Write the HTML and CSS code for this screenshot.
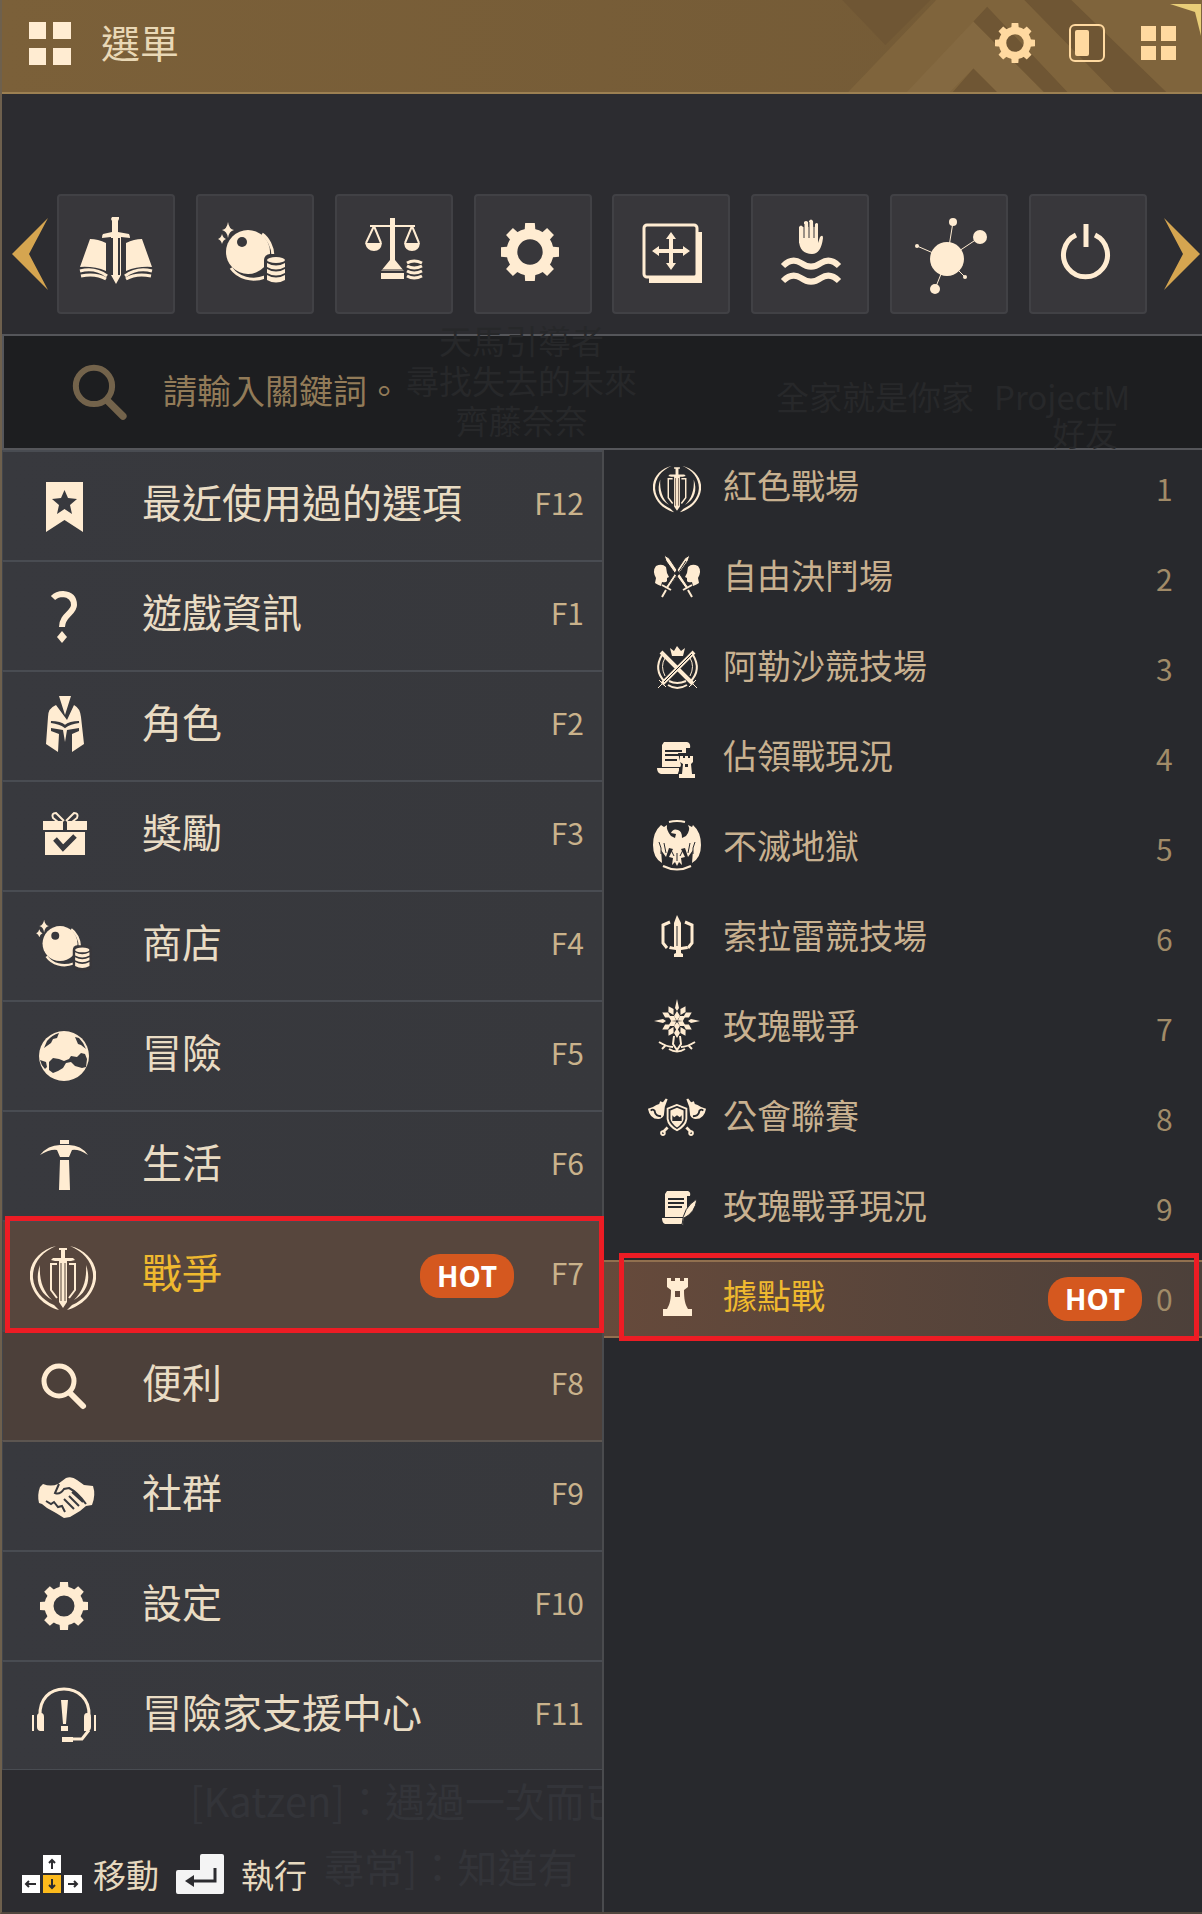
FILE: index.html
```html
<!DOCTYPE html>
<html lang="zh-Hant">
<head>
    <meta charset="UTF-8">
    <meta name="viewport" content="width=device-width, initial-scale=1.0">
    <title>選單</title>
    <link rel="stylesheet" href="styles.css">
</head>
<body>
    <!-- Shared icons -->
    <svg class="sprite" aria-hidden="true">
        <symbol id="gear" viewBox="0 0 48 48">
            <circle cx="24" cy="24" r="15" fill="none" stroke="currentColor" stroke-width="9"/>
            <g fill="currentColor">
                <path id="tooth" d="M19.500 7L20 0h8l.5 7z"/>
                <use href="#tooth" transform="rotate(45 24 24)"/>
                <use href="#tooth" transform="rotate(90 24 24)"/>
                <use href="#tooth" transform="rotate(135 24 24)"/>
                <use href="#tooth" transform="rotate(180 24 24)"/>
                <use href="#tooth" transform="rotate(225 24 24)"/>
                <use href="#tooth" transform="rotate(270 24 24)"/>
                <use href="#tooth" transform="rotate(315 24 24)"/>
            </g>
        </symbol>
        <symbol id="orb" viewBox="0 0 80 80">
            <circle cx="33" cy="38" r="22" fill="currentColor"/>
            <path d="M47 20c6 4 11 13 11 22M16 54c7 10 21 14 34 9" fill="none" stroke="currentColor" stroke-width="3"/>
            <circle cx="27" cy="28" r="5" fill="#38373b"/>
            <rect x="49" y="40" width="24" height="32" rx="6" fill="#38373b"/>
            <g fill="currentColor">
                <ellipse cx="61" cy="46" rx="9" ry="3"/>
                <path d="M52 49q9 5 18 0v4q-9 5-18 0zM52 55q9 5 18 0v4q-9 5-18 0zM52 61q9 5 18 0v5q-9 5-18 0z"/>
                <path d="M13 8q1 7 6 8-5 1-6 8-1-7-6-8 5-1 6-8zM7 20q1 4 4 5-3 1-4 5-1-4-4-5 3-1 4-5z"/>
            </g>
        </symbol>
        <symbol id="emblem" viewBox="0 0 66 66">
            <g fill="currentColor">
                <path d="M26 1C9 5-2 19 0 34c2 15 14 27 29 31l-5-5C12 55 4 45 3 33 2 20 11 7 26 1z"/>
                <path d="M40 1c17 4 28 18 26 33-2 15-14 27-29 31l5-5c12-5 20-15 21-27C64 20 55 7 40 1z"/>
                <path d="M10 20c-5 14-2 27 12 35-9-9-13-20-12-35zM56 20c5 14 2 27-12 35 9-9 13-20 12-35z"/>
                <path d="M29 3h8v2h-2v8h8l2 2-4 1h-4v41l-4 6-4-6V16h-4l-4-1 2-2h8V5h-2z"/>
            </g>
            <path d="M27 19h-6v26l6 8M39 19h6v26l-6 8" fill="none" stroke="currentColor" stroke-width="2"/>
            <path d="M31 18v38M35 18v38" stroke="#57463d"/>
        </symbol>
        <symbol id="lens" viewBox="0 0 60 60">
            <circle cx="25" cy="25" r="15" fill="none" stroke="currentColor" stroke-width="5"/>
            <path d="M36 37l13 13" stroke="currentColor" stroke-width="6" stroke-linecap="round"/>
        </symbol>
        <symbol id="tower" viewBox="0 0 60 60">
            <path fill="currentColor" fill-rule="evenodd" d="M20 9h4v3h4V9h5v3h4V9h4v9l-4 3c0 9 1 14 4 19h4v7H16v-7h4c3-5 4-10 4-19l-4-3zM28 22v6h5v-6z"/>
        </symbol>
    </svg>

    <div class="menu-window">
        <header class="title-bar">
            <svg class="title-pattern" viewBox="0 0 402 94" aria-hidden="true">
                <path d="M40 94l90-94h272v94z" fill="#7f643c"/>
                <path d="M34 0h90L78 46z" fill="#6f5634"/>
                <path d="M100 94l68-72 72 72h-48l-24-24-24 24z" fill="#846941"/>
                <path d="M147 94l21-24 24 24zM168 22l14-15 82 87h-24zM220 0h48l97 94h-53z" fill="#6f5634"/>
            </svg>
            <svg class="title-icon" viewBox="0 0 42 44" aria-hidden="true">
                <path d="M0 1h17v17H0zM24 1h18v17H24zM0 27h17v17H0zM24 27h18v17H24z" fill="#ffecd2"/>
            </svg>
            <h1>選單</h1>
            <div class="window-tools">
                <button type="button" aria-label="設定"><svg viewBox="0 0 48 48"><use href="#gear"/></svg></button>
                <button type="button" aria-label="側邊欄"><svg viewBox="0 0 40 40"><rect x="3" y="2" width="34" height="36" rx="5" fill="none" stroke="currentColor" stroke-width="2"/><rect x="8" y="7" width="14" height="26" rx="2" fill="currentColor"/></svg></button>
                <button type="button" aria-label="全部選單"><svg viewBox="0 0 40 40"><path d="M2 3h15v15H2zM22 3h15v15H22zM2 23h15v14H2zM22 23h15v14H22z" fill="currentColor"/></svg></button>
            </div>
            <svg class="title-corner" viewBox="0 0 32 32" aria-hidden="true"><path d="M0 0h31v32l-6-24z" fill="#e8cd78"/></svg>
        </header>

        <nav class="shortcuts" aria-label="快捷選單">
            <button type="button" class="arrow" aria-label="上一頁">
                <svg viewBox="0 0 36 72"><path d="M36 0L0 36l36 36-19-36z" fill="#d5a550"/></svg>
            </button>
            <div class="tiles">
                <button type="button" class="tile" aria-label="黑暗知識">
                    <svg viewBox="0 0 80 80">
                        <path d="M14 25q8 0 16 4v28q-12-5-26-4zM66 25q-8 0-16 4v28q12-5 26-4z" fill="currentColor"/>
                        <path d="M4 57q15-4 27 5M5 62q15-3 25 3M76 57q-15-4-27 5M75 62q-15-3-25 3" fill="none" stroke="currentColor" stroke-width="3"/>
                        <path d="M36 3h7v2l-1 2v11l11 2q1 2 1 4l-9-1v38l-5 9-5-9V23l-9 1q0-3 1-4l9-2V7l-1-2z" fill="currentColor"/>
                        <path d="M36 24v37M43 24v37" stroke="#38373b" stroke-width="2"/>
                    </svg>
                </button>
                <button type="button" class="tile" aria-label="商店"><svg viewBox="0 0 80 80"><use href="#orb"/></svg></button>
                <button type="button" class="tile" aria-label="交易所">
                    <svg viewBox="0 0 80 80">
                        <path d="M36 4h5v42l9 11H27l9-11zM27 59h23v6H27z" fill="currentColor"/>
                        <path d="M16 12h45M20 12l-8 17M20 12l7 17M58 12l-7 17M58 12l7 17" fill="none" stroke="currentColor" stroke-width="2"/>
                        <path d="M11 29h17q-1 8-8 8t-9-8zM50 29h16q-1 8-8 8t-8-8z" fill="currentColor"/>
                        <path d="M53 49q7-4 15 0M53 52q7 4 15 0M53 57q7 4 15 0M53 62q7 4 15 0" fill="none" stroke="currentColor" stroke-width="3"/>
                        <path d="M27 56h23" stroke="#38373b"/>
                    </svg>
                </button>
                <button type="button" class="tile" aria-label="設定"><svg viewBox="-8 -9 80 80"><use href="#gear" width="58" height="58"/></svg></button>
                <button type="button" class="tile" aria-label="編輯介面">
                    <svg viewBox="0 0 80 80">
                        <path d="M18 64v5h53V18h-5v45z" fill="currentColor"/>
                        <rect x="13" y="11" width="53" height="52" rx="3" fill="#38373b" stroke="currentColor" stroke-width="3"/>
                        <path d="M40 22v30M25 37h30" stroke="currentColor" stroke-width="4"/>
                        <path d="M40 18l5 7H35zM40 56l5-7H35zM21 37l7-5v10zM59 37l-7-5v10z" fill="currentColor"/>
                    </svg>
                </button>
                <button type="button" class="tile" aria-label="脫困">
                    <svg viewBox="0 0 80 80">
                        <path d="M29 13q2-3 4 0l1 10V8q2-2 4 0v14l1-15q2-3 4 0l1 15 1-12q2-2 3 0v19l2-6q3-3 3 1-2 16-11 16c-8 0-13-5-13-14z" fill="currentColor"/>
                        <path d="M29 13h19v16H29z" fill="currentColor"/>
                        <path d="M34 10v14M39 8v16M44 9v15" stroke="#38373b"/>
                        <path d="M13 52q9-9 18-3c7 5 13 5 20 0q9-6 18 3M13 67q9-9 18-3c7 5 13 5 20 0q9-6 18 3" fill="none" stroke="currentColor" stroke-width="6"/>
                    </svg>
                </button>
                <button type="button" class="tile" aria-label="伺服器">
                    <svg viewBox="0 0 80 80">
                        <path d="M44 8l-6 37L71 23M8 32l30 13 18 18M38 45L26 75" fill="none" stroke="currentColor"/>
                        <g fill="currentColor"><circle cx="38" cy="45" r="17"/><circle cx="71" cy="23" r="7"/><circle cx="44" cy="8" r="4"/><circle cx="8" cy="32" r="2"/><circle cx="56" cy="63" r="2"/><circle cx="26" cy="75" r="5"/></g>
                    </svg>
                </button>
                <button type="button" class="tile" aria-label="結束遊戲">
                    <svg viewBox="0 0 80 80">
                        <path d="M28 21a22 22 0 1 0 19 0" fill="none" stroke="currentColor" stroke-width="5"/>
                        <path d="M38 10v23" stroke="currentColor" stroke-width="5"/>
                    </svg>
                </button>
            </div>
            <button type="button" class="arrow" aria-label="下一頁">
                <svg viewBox="0 0 36 72"><path d="M0 0l36 36L0 72l19-36z" fill="#d5a550"/></svg>
            </button>
        </nav>

        <div class="search">
            <!-- World text that shows through the panel -->
            <div class="ghost ghost-search" aria-hidden="true">
                <span>天馬引導者</span>
                <span>尋找失去的未來</span>
                <span>齊藤奈奈</span>
            </div>
            <div class="ghost ghost-guild" aria-hidden="true">
                <span>全家就是你家</span>
                <span>ProjectM</span>
            </div>
            <div class="ghost ghost-friend" aria-hidden="true">
                <span>好友</span>
            </div>
            <label for="keyword" aria-label="搜尋"><svg viewBox="6 6 48 48"><use href="#lens" width="60" height="60"/></svg></label>
            <input type="text" id="keyword" placeholder="請輸入關鍵詞。">
        </div>

        <main class="columns">
            <div class="left-column">
                <nav class="main-menu" aria-label="主選單">
                    <button type="button">
                        <svg viewBox="-5 -5 70 70"><path fill="currentColor" fill-rule="evenodd" d="M12 6h37v50L30.500 44 12 56zM30.500 14l-3.500 8-9 1 7 6-2 9 7.500-5 7.500 5-2-9 7-6-9-1z"/></svg>
                        <span class="label">最近使用過的選項</span><kbd>F12</kbd>
                    </button>
                    <button type="button">
                        <svg viewBox="-5 -5 70 70"><path d="M19 12q4-4 10-4 11 1 11 11c0 8-12 10-12 22" fill="none" stroke="currentColor" stroke-width="6"/><path d="M28 45l5 6-5 6-5-6z" fill="currentColor"/></svg>
                        <span class="label">遊戲資訊</span><kbd>F1</kbd>
                    </button>
                    <button type="button">
                        <svg viewBox="-5 -5 70 70"><path d="M25 0h12l-6 19zM22 9q-8 3-8 12L12 48l12 8 1-18-8-3v-3l12 2 2 12 2-12 12-2v3l-7 3v18l12-8-3-27q-1-9-7-12l-7 15z" fill="currentColor"/><path d="M17 26q9 0 14 4 5-4 14-4-9 1-14 5-5-4-14-5z" fill="#38393e" stroke="#38393e" stroke-width="2"/></svg>
                        <span class="label">角色</span><kbd>F2</kbd>
                    </button>
                    <button type="button">
                        <svg viewBox="-5 -5 70 70"><path d="M9 15h20v9H9zM33 15h20v9H33zM11 26h40v23H11z" fill="currentColor"/><path d="M30 15l-8-8q-5 0-3 5l5 4M32 15l8-8q5 0 3 5l-5 4" fill="none" stroke="currentColor" stroke-width="2"/><path d="M21 33l8 9 12-12" fill="none" stroke="#38393e" stroke-width="5"/></svg>
                        <span class="label">獎勵</span><kbd>F3</kbd>
                    </button>
                    <button type="button">
                        <svg viewBox="-6 -3 88 88"><use href="#orb" width="80" height="80"/></svg>
                        <span class="label">商店</span><kbd>F4</kbd>
                    </button>
                    <button type="button">
                        <svg viewBox="-5 -5 70 70"><circle cx="30" cy="30" r="25" fill="currentColor"/><path d="M25 7l-2 5-4 1-2 4-7 5 3-7q5-6 12-8zM41 11l4 1q5 5 7 11l-5-4-3-1zM6 34l6 2 1 5-2 2q-4-4-5-9zM15 36l4-4 6 1 5 2 5-2 2-3 6 1 4-4 4 1 2 5-1 8-4 1-7-2-4-4-5 1-3 5-5 3-5 2-4-3z" fill="#38393e"/></svg>
                        <span class="label">冒險</span><kbd>F5</kbd>
                    </button>
                    <button type="button">
                        <svg viewBox="-5 -5 70 70"><path d="M26 4h9v4h-9zM6 19Q14 9 26 9h9q12 0 19 10-9-6-16-5l-3 7h-9l-3-7q-7-1-17 5zM26 24h9l1 30H25z" fill="currentColor"/></svg>
                        <span class="label">生活</span><kbd>F6</kbd>
                    </button>
                    <button type="button" class="active">
                        <svg viewBox="-1 -4 70 70"><use href="#emblem" width="66" height="66"/></svg>
                        <span class="label">戰爭</span><span class="badge">HOT</span><kbd>F7</kbd>
                    </button>
                    <button type="button" class="hover">
                        <svg viewBox="-5 -5 70 70"><use href="#lens" width="60" height="60"/></svg>
                        <span class="label">便利</span><kbd>F8</kbd>
                    </button>
                    <button type="button">
                        <svg viewBox="-5 -5 70 70"><path d="M6 21l3-3q8 3 15 0l8-6q6-2 11 2l7 5 9 1q3 9-1 19l-6 1-6 5-5 3-5 3-6 1-8-5-9-5-5-4-3-1q-2-8 1-16z" fill="currentColor"/><path d="M25 18l-4 9q5 2 9-4l5-1q8 4 17 16M12 35l5 3 3-2 4 5 4-1 3 6M30 33l10 10M35 30l10 10M38 26l11 10" fill="none" stroke="#38393e" stroke-width="2"/></svg>
                        <span class="label">社群</span><kbd>F9</kbd>
                    </button>
                    <button type="button">
                        <svg viewBox="-11 -11 70 70"><use href="#gear" width="48" height="48"/></svg>
                        <span class="label">設定</span><kbd>F10</kbd>
                    </button>
                    <button type="button">
                        <svg viewBox="-5 -5 70 70"><path d="M6 30C5 13 16 3 30 3s26 10 25 27M55 44l-7 9H37" fill="none" stroke="currentColor" stroke-width="3"/><path d="M3 30q0-3 4-3 3 0 3 4v14H6q-3-1-3-4zM50 31q0-4 3-4 4 0 4 4v10q0 4-4 4h-3zM-2 29h2v16h-2zM60 29h2v16h-2zM27 14h7l-2 24h-3zM27 40h7v5h-7zM28 51h11v5H28z" fill="currentColor"/></svg>
                        <span class="label">冒險家支援中心</span><kbd>F11</kbd>
                    </button>
                </nav>

                <footer class="key-help">
                    <div class="ghost ghost-chat" aria-hidden="true">
                        <span>[Katzen]：遇過一次而已</span>
                        <span class="second-line">尋常]：知道有</span>
                    </div>
                    <svg class="arrow-keys" viewBox="0 0 60 40" aria-hidden="true">
                        <path d="M21 1h18v18H21zM0 21h18v18H0zM42 21h18v18H42z" fill="#fff"/>
                        <path d="M21 21h18v18H21z" fill="#fcba1c"/>
                        <path d="M30 15V6M27 9l3-3 3 3M30 25v9M27 31l3 3 3-3M14 30H4M7 27l-3 3 3 3M46 30h9M52 27l3 3-3 3" fill="none" stroke="#2c2c30" stroke-width="2"/>
                    </svg>
                    <span>移動</span>
                    <svg class="enter-key" viewBox="0 0 48 40" aria-hidden="true">
                        <path d="M26 0h20q2 0 2 2v36q0 2-2 2H2q-2 0-2-2V18q0-2 2-2h22V2q0-2 2-2z" fill="#f4f4f4"/>
                        <path d="M39 14v13H14" fill="none" stroke="#2c2c30" stroke-width="3"/>
                        <path d="M9 27l9-6v12z" fill="#2c2c30"/>
                    </svg>
                    <span>執行</span>
                </footer>
            </div>

            <nav class="sub-menu" aria-label="戰爭">
                <button type="button">
                    <svg viewBox="0 0 60 60"><use href="#emblem" x="6" y="6" width="48" height="48"/></svg>
                    <span class="label">紅色戰場</span><kbd>1</kbd>
                </button>
                <button type="button">
                    <svg viewBox="0 0 60 60">
                        <path id="head" d="M9 17q6-3 10 1l1 6 2 4-2 1v3q-1 2-5 1l-1 4q-3-1-6-3l1-5q-4-7 0-12z" fill="currentColor"/>
                        <use href="#head" transform="matrix(-1 0 0 1 60 0)"/>
                        <path d="M17 6l5 3 20 30-3 1L19 12zM43 6l-5 3-20 30 3 1 20-28z" fill="currentColor" stroke="#28292d"/>
                        <path d="M39 12L22 38" stroke="#28292d"/>
                        <path d="M15 36l9 5M45 36l-9 5M19 41l-4 7M41 41l4 7" fill="none" stroke="currentColor" stroke-width="2"/>
                    </svg>
                    <span class="label">自由決鬥場</span><kbd>2</kbd>
                </button>
                <button type="button">
                    <svg viewBox="0 0 60 60">
                        <path d="M15 16q-9 15 3 27M46 16q9 15-3 27M21 46q9 6 19 0M22 42q8 4 17 0" fill="none" stroke="currentColor" stroke-width="2"/>
                        <path d="M18 19q-5 8 0 18M43 19q5 8 0 18" fill="none" stroke="currentColor"/>
                        <path d="M14 13l32 32M47 13L15 45" stroke="currentColor" stroke-width="4"/>
                        <path d="M45 15L17 43" stroke="#28292d"/>
                        <path d="M11 49l5-5M50 49l-5-5M12 41l7 7M49 41l-7 7" stroke="currentColor"/>
                        <path d="M23 9l4 3 3-5 4 5 4-3-2 8H25z" fill="currentColor"/>
                    </svg>
                    <span class="label">阿勒沙競技場</span><kbd>3</kbd>
                </button>
                <button type="button">
                    <svg viewBox="0 0 60 60">
                        <path d="M17 13h23q4 1 3 6h-4v19H15V16zM10 39h22v6H14q-4-1-4-6z" fill="currentColor"/>
                        <path d="M18 22h17M18 26h14M18 31h12" stroke="#28292d" stroke-width="2"/>
                        <path d="M31 24h18v11l3 15H29l5-14z" fill="#28292d"/>
                        <path d="M33 27h3v2h2v-2h3v2h2v-2h3v6l-2 2 1 10h3v4H32v-4h3l1-10-3-2z" fill="currentColor"/>
                        <path d="M38 35h3v3h-3z" fill="#28292d"/>
                    </svg>
                    <span class="label">佔領戰現況</span><kbd>4</kbd>
                </button>
                <button type="button">
                    <svg viewBox="0 0 60 60">
                        <path d="M22 3q8-2 16 0M16 47q14 7 28 0" fill="none" stroke="currentColor" stroke-width="2"/>
                        <path d="M14 6q-8 7-8 20t9 18l-1-13 5 7 3-9 4 1-4 8 4 1-1 7 3-3 2 4 2-4 3 3-1-7 4-1-4-8 4-1 3 9 5-7-1 13q9-5 9-18T46 6l-1 2-4-2q3 5-2 11l-4 2q0-7-4-8-5-2-7 3l5 1-1 4-4-2q-5-6-4-11l-3 2z" fill="currentColor"/>
                        <path d="M12 23q3 6 2 12M17 24l2 10M48 23q-3 6-2 12M43 24l-2 10M24 31l3 6M36 31l-3 6M30 34v8" fill="none" stroke="#28292d"/>
                    </svg>
                    <span class="label">不滅地獄</span><kbd>5</kbd>
                </button>
                <button type="button">
                    <svg viewBox="0 0 60 60">
                        <path d="M27 14l3-8 4 8v24l6-1 1 3-7 1v3l2 1v3h-9v-3l2-1v-3l-7-1 1-3 4 1z" fill="currentColor"/>
                        <path d="M23 13l-7 3v18l4 5M38 13l7 3v18l-4 5" fill="none" stroke="currentColor" stroke-width="3"/>
                        <path d="M30 17v20" stroke="#28292d"/>
                    </svg>
                    <span class="label">索拉雷競技場</span><kbd>6</kbd>
                </button>
                <button type="button">
                    <svg viewBox="0 0 60 60">
                        <g fill="currentColor">
                            <g id="petals">
                                <path d="M30 0l2 9-2 3-2-3zM30 14l2 4-2 4-2-4z"/>
                                <path d="M30 0l2 9-2 3-2-3z" transform="rotate(90 30 22) translate(0 -1)"/>
                                <path d="M30 0l2 9-2 3-2-3z" transform="rotate(270 30 22) translate(0 -1)"/>
                            </g>
                            <path id="petal" d="M30 5l3 5-3 5-3-5z" transform="rotate(30 30 22)"/>
                            <use href="#petal" transform="rotate(30 30 22)"/>
                            <use href="#petal" transform="rotate(90 30 22)"/>
                            <use href="#petal" transform="rotate(120 30 22)"/>
                            <use href="#petal" transform="rotate(150 30 22)"/>
                            <use href="#petal" transform="rotate(180 30 22)"/>
                            <use href="#petal" transform="rotate(210 30 22)"/>
                            <use href="#petal" transform="rotate(270 30 22)"/>
                            <use href="#petal" transform="rotate(300 30 22)"/>
                            <path id="core" d="M30 12l3 5-3 4-3-4z"/>
                            <use href="#core" transform="rotate(60 30 22)"/>
                            <use href="#core" transform="rotate(120 30 22)"/>
                            <use href="#core" transform="rotate(180 30 22)"/>
                            <use href="#core" transform="rotate(240 30 22)"/>
                            <use href="#core" transform="rotate(300 30 22)"/>
                        </g>
                        <path d="M27 37l-1 8 4 6 4-6-1-8M26 48q-6 0-14-5M34 48q6 0 14-5M18 47l-3 3M42 47l3 3M22 50q8 5 16 0" fill="none" stroke="currentColor" stroke-width="2"/>
                    </svg>
                    <span class="label">玫瑰戰爭</span><kbd>7</kbd>
                </button>
                <button type="button">
                    <svg viewBox="-2 0 64 60">
                        <path id="axe" d="M-1 19q5-1 9-4l3-1 1-3 3 1 3-4 2 1-3 8-1 9q-2 4-6 4-9 0-11-11z" fill="currentColor"/>
                        <use href="#axe" transform="matrix(-1 0 0 1 60 0)"/>
                        <path d="M2 21q2-2 4 0 1 6 7 6M58 21q-2-2-4 0-1 6-7 6" fill="none" stroke="#28292d" stroke-width="2"/>
                        <path d="M20 39l-5 5M40 39l5 5" stroke="currentColor" stroke-width="3"/>
                        <g fill="none" stroke="currentColor" stroke-width="2"><circle cx="15" cy="45" r="2"/><circle cx="45" cy="45" r="2"/><path d="M30 15l-10 4v11q1 7 10 12 9-5 10-12V19z"/></g>
                        <path d="M30 18l-7 3v9q1 5 7 9 6-4 7-9v-9z" fill="currentColor"/>
                        <path d="M25 26l2 2 3-2 3 2 2-2v6H25z" fill="#28292d"/>
                    </svg>
                    <span class="label">公會聯賽</span><kbd>8</kbd>
                </button>
                <button type="button">
                    <svg viewBox="0 0 60 60">
                        <path d="M20 12h21q3 1 2 5h-3v21H18V15zM15 39h22v4q-1 2-3 2H18q-3-1-3-6z" fill="currentColor"/>
                        <path d="M21 20h16M21 24h16M21 28h14" stroke="#28292d" stroke-width="2"/>
                        <path d="M50 20q-2 14-13 19l-1 8-1-1q1-18 15-26z" fill="currentColor" stroke="#28292d"/>
                    </svg>
                    <span class="label">玫瑰戰爭現況</span><kbd>9</kbd>
                </button>
                <button type="button" class="active">
                    <svg viewBox="0 0 60 60"><use href="#tower" width="60" height="60"/></svg>
                    <span class="label">據點戰</span><span class="badge">HOT</span><kbd>0</kbd>
                </button>
            </nav>
        </main>
    </div>
</body>
</html>
```

FILE: styles.css
```css
* {
    box-sizing: border-box;
}
body {
    margin: 0;
    background-color: #2c2c30;
    color: #e6d9bf;
    font-family: "Noto Sans CJK TC", sans-serif;
}
button {
    padding: 0;
    border: none;
    background: none;
    color: #ffecd2;
    font-family: inherit;
    cursor: pointer;
}
svg {
    display: block;
    flex: none;
}
.sprite {
    position: absolute;
    width: 0;
    height: 0;
}
.menu-window {
    display: flex;
    flex-direction: column;
    min-height: 100vh;
    border-left: 2px solid #6e604d;
    border-bottom: 2px solid #51463e;
}

/* Title bar */
.title-bar {
    position: relative;
    display: flex;
    align-items: center;
    height: 94px;
    padding: 0 23px 6px 27px;
    background: linear-gradient(90deg, #7b6039, #735a36);
    border-bottom: 2px solid #9c8052;
}
.title-pattern {
    position: absolute;
    top: 0;
    right: 0;
    height: 92px;
}
.title-icon {
    width: 42px;
    height: 44px;
}
.title-bar h1 {
    margin: 0 0 0 30px;
    padding-bottom: 4px;
    color: #e9d8b6;
    font-size: 39px;
    font-weight: 400;
    line-height: 48px;
}
.window-tools {
    position: relative;
    display: flex;
    gap: 32px;
    margin-left: auto;
}
.window-tools button {
    color: #ffd9a0;
}
.window-tools svg {
    width: 40px;
    height: 40px;
}
.title-corner {
    position: absolute;
    top: 4px;
    right: 0;
    width: 32px;
    height: 32px;
}

/* Shortcut tiles */
.shortcuts {
    display: flex;
    justify-content: space-between;
    padding: 100px 2px 20px 10px;
}
.arrow svg {
    width: 36px;
    height: 72px;
}
.tiles {
    display: flex;
    flex: 1;
    justify-content: space-between;
    margin: 0 17px 0 9px;
}
.tile {
    display: flex;
    align-items: center;
    justify-content: center;
    width: 118px;
    height: 120px;
    border: 2px solid #414145;
    border-radius: 4px;
    background-color: #38373b;
}
.tile svg {
    width: 80px;
    height: 80px;
}

/* Search */
.search {
    position: relative;
    display: flex;
    align-items: center;
    gap: 34px;
    height: 116px;
    padding-left: 67px;
    background-color: #1d1e20;
    border: 2px solid #55565a;
    border-right: none;
}
.search label {
    position: relative;
    color: #73634b;
}
.search label svg {
    width: 58px;
    height: 58px;
}
.search input {
    position: relative;
    width: 240px;
    height: 60px;
    padding: 0 0 6px;
    border: none;
    outline: none;
    background: none;
    color: #e6d9bf;
    font-family: inherit;
    font-size: 34px;
}
.search input::placeholder {
    color: #927b58;
    opacity: 1;
}

/* Faint text behind the panels */
.ghost {
    position: absolute;
    display: flex;
    color: #27282a;
    font-size: 33px;
    line-height: 40px;
    white-space: nowrap;
}
.ghost-search {
    top: -16px;
    left: 402px;
    flex-direction: column;
    align-items: center;
}
.ghost-guild {
    top: 40px;
    left: 772px;
    gap: 20px;
}
.ghost-friend {
    top: 76px;
    left: 1048px;
}
.ghost-chat {
    top: 6px;
    left: 188px;
    flex-direction: column;
    gap: 18px;
    color: #333439;
    font-size: 40px;
    line-height: 48px;
}
.second-line {
    margin-left: 134px;
}

/* Two columns */
.columns {
    display: grid;
    flex: 1;
    grid-template-columns: 1fr 1fr;
}
.left-column {
    display: flex;
    flex-direction: column;
}
.main-menu button {
    position: relative;
    display: flex;
    align-items: center;
    width: 100%;
    height: 110px;
    padding: 0 18px 0 26px;
    background: linear-gradient(90deg, #38393e, #37383c);
    border-top: 2px solid #494c52;
    border-left: 1px solid #42454b;
}
.main-menu button:last-child {
    border-bottom: 1px solid #494c52;
}
.main-menu svg {
    width: 70px;
    height: 70px;
    margin-right: 43px;
}
.label {
    flex: 1;
    text-align: left;
    white-space: nowrap;
}
.main-menu .label {
    padding-bottom: 10px;
    color: #e9dcc4;
    font-size: 40px;
    line-height: 56px;
}
kbd {
    color: #c9b28b;
    font-family: "Noto Sans CJK TC", sans-serif;
    font-size: 30px;
    line-height: 40px;
}
.main-menu kbd {
    min-width: 70px;
    padding-bottom: 8px;
    text-align: right;
}
.main-menu .hover {
    background: #4c403a;
}
.main-menu .hover + button {
    border-top-color: #5c5550;
}
.main-menu .active {
    background: #57463d;
}
.main-menu .active .label,
.sub-menu .active .label {
    color: #efb92f;
}
.main-menu .active::after,
.sub-menu .active::after {
    content: "";
    position: absolute;
    z-index: 1;
    border: 5px solid #ed1c24;
}
.main-menu .active::after {
    top: -6px;
    right: -2px;
    bottom: -3px;
    left: 2px;
}
.badge {
    width: 94px;
    height: 44px;
    border-radius: 20px;
    background-color: #d5581f;
    color: #fff;
    font-family: "Open Sans", sans-serif;
    font-size: 28px;
    font-weight: 700;
    line-height: 44px;
    text-align: center;
}

/* Sub menu */
.sub-menu {
    display: flex;
    flex-direction: column;
    gap: 12px;
    background-color: #28292d;
    border-left: 2px solid #4a4b4e;
}
.sub-menu button {
    position: relative;
    display: flex;
    align-items: center;
    height: 78px;
    padding: 0 30px 0 43px;
}
.sub-menu svg {
    width: 60px;
    height: 60px;
    margin-right: 16px;
}
.sub-menu .label {
    padding-bottom: 8px;
    color: #c8b190;
    font-size: 34px;
    line-height: 48px;
}
.sub-menu kbd {
    width: 16px;
    margin-left: 14px;
    padding-bottom: 2px;
    color: #a18b68;
    text-align: center;
}
.sub-menu .active {
    background: linear-gradient(90deg, #664a3b, #4c403a);
    border-top: 2px solid #91704f;
    border-bottom: 2px solid #91704f;
}
.sub-menu .active::after {
    top: -9px;
    right: 3px;
    bottom: -5px;
    left: 15px;
}

/* Key help */
.key-help {
    position: relative;
    display: flex;
    flex: 1;
    align-items: flex-end;
    min-height: 140px;
    padding: 0 0 18px 20px;
    overflow: hidden;
}
.key-help > span {
    position: relative;
    color: #e6d9bf;
    font-size: 33px;
    line-height: 40px;
}
.arrow-keys {
    position: relative;
    width: 60px;
    height: 40px;
    margin-right: 11px;
}
.enter-key {
    position: relative;
    width: 48px;
    height: 40px;
    margin: 0 17px;
}
```
